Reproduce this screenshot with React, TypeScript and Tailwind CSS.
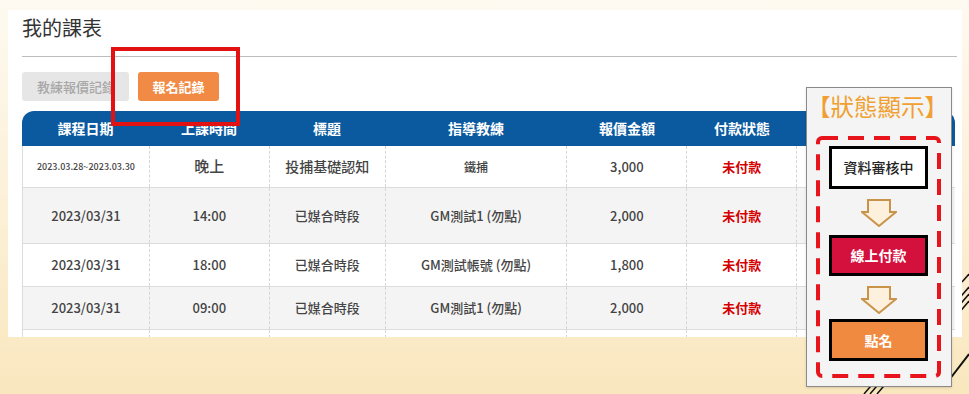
const FONT = { fontFamily: '"Noto Sans CJK TC", "Noto Sans", sans-serif' }

const cols = ['w-[127px]', 'w-[120px]', 'w-[116px]', 'w-[182px]', 'w-[120px]', 'w-[110px]', 'w-[158px]']
// last column sits under the status panel, so its label is left blank
const headers = ['課程日期', '上課時間', '標題', '指導教練', '報價金額', '付款狀態', '']

const rows = [
  { h: 'h-[42px]', bg: 'bg-white', date: '2023.03.28~2023.03.30', time: '晚上', title: '投捕基礎認知', coach: '鐵捕', price: '3,000', first: true },
  { h: 'h-[56px]', bg: 'bg-[#f4f4f4]', date: '2023/03/31', time: '14:00', title: '已媒合時段', coach: 'GM測試1 (勿點)', price: '2,000' },
  { h: 'h-[43px]', bg: 'bg-white', date: '2023/03/31', time: '18:00', title: '已媒合時段', coach: 'GM測試帳號 (勿點)', price: '1,800' },
  { h: 'h-[43px]', bg: 'bg-[#f4f4f4]', date: '2023/03/31', time: '09:00', title: '已媒合時段', coach: 'GM測試1 (勿點)', price: '2,000' },
  { h: 'h-[43px]', bg: 'bg-white', date: '', time: '', title: '', coach: '', price: '' },
]

function DownArrow() {
  return (
    <svg width="36" height="28" viewBox="0 0 36 28">
      <path d="M7 1 H29 V13 H35 L18 27 L1 13 H7 Z" fill="#fdf0dc" stroke="#c9944a" strokeWidth="2" strokeLinejoin="miter" />
    </svg>
  )
}

function StatusPanel() {
  return (
    <div className="absolute left-[806px] top-[87px] w-[146px] h-[300px] bg-[#f4f4f4] border border-[#8a8a8a] shadow-sm">
      <div className="pt-[2px] h-[48px] text-[23.5px] leading-[33px] text-[#f0a030] whitespace-nowrap">【狀態顯示】</div>
      <div className="relative ml-[9px] w-[125px] h-[242px]">
        <svg className="absolute inset-0" width="125" height="242">
          <rect x="2" y="2" width="121" height="238" rx="4" fill="none" stroke="#e8141c" strokeWidth="4" strokeDasharray="16 10" />
        </svg>
        <div className="relative flex flex-col items-center pt-[10px]">
          <div className="w-[99px] h-[43px] border-[3px] border-black bg-white flex items-center justify-center text-[14px] font-medium text-[#222]">資料審核中</div>
          <div className="mt-[10px] h-[28px]"><DownArrow /></div>
          <div className="mt-[8px] w-[99px] h-[41px] border-[3px] border-black bg-[#d4113c] flex items-center justify-center text-[14px] font-bold text-white">線上付款</div>
          <div className="mt-[10px] h-[28px]"><DownArrow /></div>
          <div className="mt-[5px] w-[99px] h-[42px] border-[3px] border-black bg-[#f08a40] flex items-center justify-center text-[14px] font-bold text-white">點名</div>
        </div>
      </div>
    </div>
  )
}

export default function App() {
  return (
    <div className="relative w-[969px] h-[394px] overflow-hidden bg-gradient-to-b from-[#fefaf1] to-[#f9e7be]" style={FONT}>
      {/* slide decoration */}
      <svg className="absolute left-0 top-0" width="969" height="394">
        <g stroke="#111" strokeWidth="1.5">
          <line x1="956" y1="302" x2="969" y2="287" />
          <line x1="957" y1="308" x2="969" y2="294" />
          <line x1="958" y1="314" x2="969" y2="301" />
          <line x1="962" y1="282" x2="969" y2="274" />
          <line x1="864" y1="394" x2="876" y2="380" />
          <line x1="870" y1="394" x2="882" y2="380" />
          <line x1="877" y1="394" x2="889" y2="380" />
        </g>
        <line x1="946" y1="384" x2="969" y2="354" stroke="#111" strokeWidth="2" />
      </svg>

      <div className="relative pt-[10px] pl-[8px]">
        <div className="w-[954px] h-[327px] bg-white overflow-hidden px-[14px]">
          <h1 className="pt-[4px] h-[46px] text-[20px] leading-[28px] text-[#333]">我的課表</h1>
          <div className="border-t border-[#bdbdbd] w-[935px]" />

          <div className="mt-[15px] flex gap-[9px]">
            <button className="h-[29px] w-[107px] rounded-[3px] bg-[#e6e6e6] text-[13px] font-medium text-[#a8a8a8] pl-[15px] text-left whitespace-nowrap overflow-hidden">教練報價記錄</button>
            <button className="h-[29px] w-[81px] rounded-[3px] bg-[#f08a44] text-[13px] font-bold text-white">報名記錄</button>
          </div>

          <div className="mt-[10px] w-[933px]">
            <div className="flex h-[35px] bg-[#0b5aa0] rounded-t-[12px] text-white text-[14px] font-bold">
              {headers.map((h, i) => (
                <div key={i} className={`${cols[i]} flex items-center justify-center`}>{h}</div>
              ))}
            </div>
            {rows.map((r, ri) => (
              <div key={ri} className={`flex ${r.h} ${r.bg} border-b border-l border-[#dcdcdc] text-[13px] font-medium text-[#444]`}>
                <div className={`${cols[0]} flex items-center justify-center border-r border-dashed border-[#d6d6d6] ${r.first ? 'text-[9px]' : ''}`}>{r.date}</div>
                <div className={`${cols[1]} flex items-center justify-center border-r border-dashed border-[#d6d6d6] ${r.first ? 'text-[15px]' : ''}`}>{r.time}</div>
                <div className={`${cols[2]} flex items-center justify-center border-r border-dashed border-[#d6d6d6] ${r.first ? 'text-[14px]' : ''}`}>{r.title}</div>
                <div className={`${cols[3]} flex items-center justify-center border-r border-dashed border-[#d6d6d6] ${r.first ? 'text-[12px]' : ''}`}>{r.coach}</div>
                <div className={`${cols[4]} flex items-center justify-center border-r border-dashed border-[#d6d6d6]`}>{r.price}</div>
                <div className={`${cols[5]} flex items-center justify-center border-r border-dashed border-[#d6d6d6] text-[#d40000] font-bold`}>{r.price ? '未付款' : ''}</div>
                <div className={`${cols[6]}`} />
              </div>
            ))}
          </div>
        </div>
      </div>

      {/* annotation around the active tab */}
      <div className="absolute left-[111px] top-[47px] w-[129px] h-[79px] border-[4px] border-[#e31212]" />

      <StatusPanel />
    </div>
  )
}
